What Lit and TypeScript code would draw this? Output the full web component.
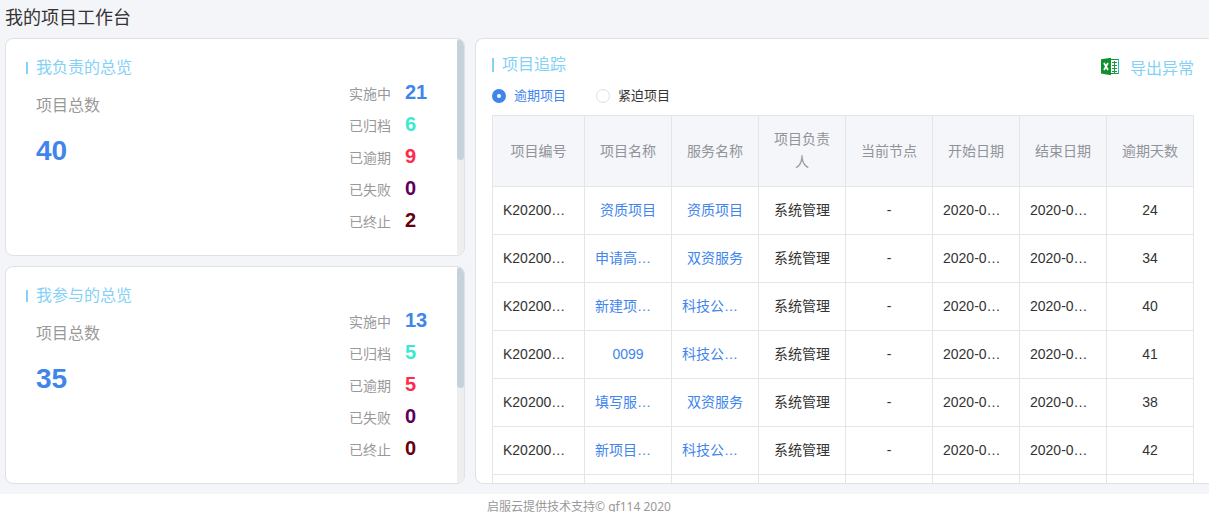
import { LitElement, html, css, svg } from "lit";
import { customElement, property, state } from "lit/decorators.js";

interface Stat {
  label: string;
  value: number;
  tone: string;
}

interface Project {
  code: string;
  name: string;
  service: string;
  owner: string;
  node: string;
  start: string;
  end: string;
  days: number;
}

const tones = ["blue", "teal", "red", "purple", "maroon"];
const labels = ["实施中", "已归档", "已逾期", "已失败", "已终止"];
const toStats = (values: number[]): Stat[] =>
  values.map((value, i) => ({ label: labels[i], value, tone: tones[i] }));

const project = (name: string, service: string, days: number): Project => ({
  code: "K20200…",
  name,
  service,
  owner: "系统管理",
  node: "-",
  start: "2020-0…",
  end: "2020-0…",
  days,
});

const projects: Project[] = [
  project("资质项目", "资质项目", 24),
  project("申请高…", "双资服务", 34),
  project("新建项…", "科技公…", 40),
  project("0099", "科技公…", 41),
  project("填写服…", "双资服务", 38),
  project("新项目…", "科技公…", 42),
];

const columns = ["项目编号", "项目名称", "服务名称", "项目负责人", "当前节点", "开始日期", "结束日期", "逾期天数"];

// Shortened values fill their cell from the left; whole values are centred.
const cellClass = (text: string) => (text.endsWith("…") ? "clip" : "");

@customElement("overview-card")
export class OverviewCard extends LitElement {
  @property() heading = "";
  @property({ type: Number }) total = 0;
  @property({ attribute: false }) stats: Stat[] = [];

  static styles = css`
    :host {
      display: flex;
      box-sizing: border-box;
      background: #fff;
      border: 1px solid #dfe1e4;
      border-radius: 8px;
      overflow: hidden;
    }
    .body {
      flex: 1;
      display: flex;
      justify-content: space-between;
      padding: 17px 24px 15px 20px;
    }
    .heading {
      display: flex;
      align-items: center;
      gap: 8px;
      margin: 0;
      font-size: 16px;
      font-weight: 400;
      line-height: 24px;
      color: #84d1f7;
    }
    .heading::before {
      content: "";
      width: 2px;
      height: 12px;
      background: #84d1f7;
    }
    .caption {
      margin: 14px 0 0 10px;
      font-size: 16px;
      line-height: 24px;
      color: #999;
    }
    .total {
      margin: 16px 0 0 10px;
      font-size: 28px;
      font-weight: 700;
      line-height: 34px;
      color: #3f85ec;
    }
    .stats {
      margin: 0;
      padding-top: 21px;
    }
    .stat {
      display: grid;
      grid-template-columns: 42px 28px;
      column-gap: 14px;
      height: 32px;
    }
    dt {
      font-size: 14px;
      line-height: 34px;
      color: #999;
    }
    dd {
      margin: 0;
      font-size: 20px;
      font-weight: 700;
      line-height: 30px;
    }
    .blue { color: #3f85ec; }
    .teal { color: #3de8d0; }
    .red { color: #ff2b4a; }
    .purple { color: #5c005c; }
    .maroon { color: #66000c; }
    .rail {
      width: 7px;
      background: #eee;
    }
    .thumb {
      height: 121px;
      border-radius: 4px;
      background: #c6d1da;
    }
  `;

  render() {
    return html`
      <div class="body">
        <div>
          <h2 class="heading">${this.heading}</h2>
          <p class="caption">项目总数</p>
          <p class="total">${this.total}</p>
        </div>
        <dl class="stats">
          ${this.stats.map(
            (s) => html`<div class="stat"><dt>${s.label}</dt><dd class=${s.tone}>${s.value}</dd></div>`
          )}
        </dl>
      </div>
      <div class="rail"><div class="thumb"></div></div>
    `;
  }
}

@customElement("app-root")
export class AppRoot extends LitElement {
  @state() private filter = "overdue";

  static styles = css`
    :host {
      display: block;
      height: 100vh;
      overflow: hidden;
      background: #fff;
      color: #333;
      font-family: "Liberation Sans", "Noto Sans CJK SC", sans-serif;
    }
    main {
      padding: 0 0 10px 5px;
      background: #f4f5f9;
    }
    .page-title {
      margin: 0;
      padding: 1px 0 3px;
      font-size: 18px;
      font-weight: 400;
      line-height: 34px;
    }
    .layout {
      display: grid;
      grid-template-columns: 460fr 734fr;
      gap: 10px;
    }
    .overviews {
      display: grid;
      gap: 10px;
    }
    .overview {
      min-height: 218px;
    }
    .tracking {
      box-sizing: border-box;
      contain: size;
      overflow: hidden;
      padding: 13px 15px 0 16px;
      background: #fff;
      border: 1px solid #dfe1e4;
      border-right: 0;
      border-radius: 8px 0 0 8px;
    }
    .top {
      display: flex;
      justify-content: space-between;
      align-items: flex-start;
    }
    .heading {
      display: flex;
      align-items: center;
      gap: 8px;
      margin: 0;
      font-size: 16px;
      font-weight: 400;
      line-height: 26px;
      color: #84d1f7;
    }
    .heading::before {
      content: "";
      width: 2px;
      height: 14px;
      background: #84d1f7;
    }
    .export {
      display: flex;
      align-items: center;
      gap: 10px;
      margin: 0;
      padding: 4px 0 0;
      border: 0;
      background: none;
      font: inherit;
      font-size: 16px;
      line-height: 26px;
      color: #84d1f7;
      cursor: pointer;
    }
    .export svg {
      margin-bottom: 5px;
    }
    .filters {
      display: flex;
      gap: 30px;
      margin: 4px 0 9px;
      font-size: 13px;
      line-height: 20px;
    }
    .filter {
      display: flex;
      align-items: center;
      gap: 8px;
      cursor: pointer;
    }
    .filter input {
      appearance: none;
      box-sizing: border-box;
      width: 14px;
      height: 14px;
      margin: 0;
      border: 1px solid #dcdfe6;
      border-radius: 50%;
      background: #fff;
    }
    .filter input:checked {
      border: 5px solid #3f85ec;
    }
    .filter input:checked + span {
      color: #3f85ec;
    }
    table {
      width: 100%;
      table-layout: fixed;
      border-collapse: separate;
      border-spacing: 0;
      border-top: 1px solid #e4e5e8;
      border-left: 1px solid #e4e5e8;
      font-size: 14px;
    }
    .first {
      width: 92px;
    }
    th,
    td {
      box-sizing: border-box;
      padding: 0 10px;
      border-right: 1px solid #e4e5e8;
      border-bottom: 1px solid #e4e5e8;
      text-align: center;
      line-height: 23px;
    }
    th {
      height: 71px;
      padding: 0 14px;
      background: #f5f6fa;
      color: #909399;
      font-weight: 400;
    }
    td {
      height: 48px;
      white-space: nowrap;
    }
    .clip {
      text-align: left;
    }
    td a {
      color: #3f85ec;
      text-decoration: none;
    }
    footer {
      padding: 4px 51px 0 0;
      font-family: "Noto Sans", "Noto Sans CJK SC", sans-serif;
      font-size: 12px;
      line-height: 18px;
      text-align: center;
      color: #999;
    }
  `;

  private excelIcon = svg`
    <path d="M10 2.5h8.5v14H10z" fill="#fff" stroke="#159b3b" stroke-width="1"/>
    <path d="M18 2h1v15h-1z" fill="#25b8c4"/>
    <path d="M12 5.500h5M12 8.500h5M12 11.500h5M12 14.500h5M14.500 4v12" fill="none" stroke="#159b3b" stroke-width="1"/>
    <path d="M1 2.300 11 .8v17.400L1 16.600z" fill="#109130"/>
    <path d="M4 6l4 7M8 6l-4 7" fill="none" stroke="#fff" stroke-width="1.700"/>
  `;

  private radio(value: string, label: string) {
    return html`<label class="filter">
      <input
        type="radio"
        name="filter"
        value=${value}
        .checked=${this.filter === value}
        @change=${() => (this.filter = value)}
      /><span>${label}</span>
    </label>`;
  }

  render() {
    return html`
      <main>
        <h1 class="page-title">我的项目工作台</h1>
        <div class="layout">
          <div class="overviews">
            <overview-card class="overview" heading="我负责的总览" .total=${40} .stats=${toStats([21, 6, 9, 0, 2])}></overview-card>
            <overview-card class="overview" heading="我参与的总览" .total=${35} .stats=${toStats([13, 5, 5, 0, 0])}></overview-card>
          </div>
          <section class="tracking">
            <div class="top">
              <h2 class="heading">项目追踪</h2>
              <button class="export" type="button">
                <svg width="20" height="19" viewBox="0 0 20 19" aria-hidden="true">${this.excelIcon}</svg>
                导出异常
              </button>
            </div>
            <div class="filters">
              ${this.radio("overdue", "逾期项目")} ${this.radio("urgent", "紧迫项目")}
            </div>
            <table>
              <thead>
                <tr>
                  ${columns.map((c, i) => html`<th class=${i === 0 ? "first" : ""} scope="col">${c}</th>`)}
                </tr>
              </thead>
              <tbody>
                ${projects.map(
                  (p) => html`<tr>
                    <td class=${cellClass(p.code)}>${p.code}</td>
                    <td class=${cellClass(p.name)}><a href="#">${p.name}</a></td>
                    <td class=${cellClass(p.service)}><a href="#">${p.service}</a></td>
                    <td>${p.owner}</td>
                    <td>${p.node}</td>
                    <td class=${cellClass(p.start)}>${p.start}</td>
                    <td class=${cellClass(p.end)}>${p.end}</td>
                    <td>${p.days}</td>
                  </tr>`
                )}
                <tr>
                  ${columns.map(() => html`<td></td>`)}
                </tr>
              </tbody>
            </table>
          </section>
        </div>
      </main>
      <footer>启服云提供技术支持© qf114 2020</footer>
    `;
  }
}
